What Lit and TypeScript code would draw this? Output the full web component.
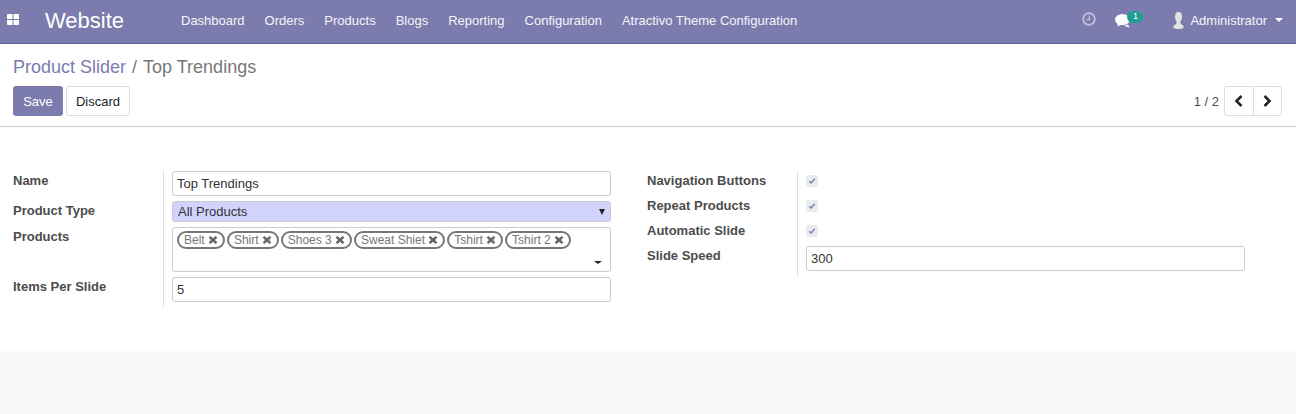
import { LitElement, html, css, svg } from "lit";
import { customElement } from "lit/decorators.js";

const MENU = ["Dashboard", "Orders", "Products", "Blogs", "Reporting", "Configuration", "Atractivo Theme Configuration"];
const TAGS = ["Belt", "Shirt", "Shoes 3", "Sweat Shiet", "Tshirt", "Tshirt 2"];

const closeIcon = svg`<svg class="x" width="10" height="10" viewBox="0 0 10 10"><path d="M.6 2.6 2.400 1 5 3.300 7.600 1 9.400 2.600 7 5l2.400 2.400L7.600 9 5 6.700 2.400 9 .6 7.400 3 5Z" fill="currentColor"/></svg>`;

@customElement("app-root")
export class AppRoot extends LitElement {
  static styles = css`
    :host {
      display: block;
      width: 1296px;
      height: 414px;
      overflow: hidden;
      background: #f9f9f9;
      font-family: "Liberation Sans", Arial, sans-serif;
      font-size: 13px;
      color: #4c4c4c;
    }
    .nav {
      height: 44px;
      box-sizing: border-box;
      background: #7c7bad;
      border-bottom: 1px solid #5e5d8e;
      display: flex;
      align-items: center;
      color: #fff;
    }
    .apps {
      margin-left: 7px;
      width: 12px;
      height: 11px;
      display: block;
      margin-top: -4px;
    }
    .brand {
      margin-left: 26px;
      width: 136px;
      font-size: 22px;
      margin-top: -2px;
    }
    .menu {
      display: flex;
      gap: 20px;
      flex: 1;
      margin-top: -3px;
      color: #f4f4f9;
    }
    .systray {
      display: flex;
      align-items: center;
      margin-top: -3px;
      color: #f4f4f9;
    }
    .clock {
      display: block;
      margin-right: 19px;
      margin-top: -2px;
    }
    .chat {
      position: relative;
      display: block;
      width: 16px;
      height: 15px;
      margin-right: 42px;
    }
    .badge {
      position: absolute;
      left: 12px;
      top: -2px;
      width: 16px;
      height: 12px;
      border-radius: 6px;
      background: #1f9e94;
      color: #fff;
      font-size: 9px;
      line-height: 11px;
      text-align: center;
    }
    .user {
      display: block;
      margin-right: 6px;
    }
    .caret {
      margin: 0 13px 0 8px;
      width: 0;
      height: 0;
      border-left: 4px solid transparent;
      border-right: 4px solid transparent;
      border-top: 4px solid #fff;
    }
    .panel {
      height: 83px;
      box-sizing: border-box;
      background: #fff;
      border-bottom: 1px solid #ccc;
      padding: 13px 14px 0 13px;
    }
    .crumbs {
      font-size: 18px;
      line-height: 21px;
      color: #777;
    }
    .crumbs .link {
      color: #7c7bad;
    }
    .crumbs .sep {
      margin: 0 6px;
    }
    .actions {
      display: flex;
      align-items: center;
      margin-top: 8px;
    }
    .btn {
      height: 30px;
      box-sizing: border-box;
      border-radius: 3px;
      display: flex;
      align-items: center;
      justify-content: center;
    }
    .save {
      width: 50px;
      background: #7c7bad;
      color: #fff;
    }
    .discard {
      width: 64px;
      margin-left: 3px;
      background: #fff;
      border: 1px solid #ddd;
      color: #212529;
    }
    .count {
      margin-left: auto;
      margin-right: 5px;
      color: #4c4c4c;
    }
    .pager {
      display: flex;
      width: 58px;
      height: 30px;
      box-sizing: border-box;
      border: 1px solid #ddd;
      border-radius: 3px;
    }
    .pager span {
      flex: 1;
      display: flex;
      align-items: center;
      justify-content: center;
    }
    .pager span + span {
      border-left: 1px solid #ddd;
    }
    .sheet {
      height: 224px;
      box-sizing: border-box;
      background: #fff;
      padding: 44px 0 0 13px;
      display: flex;
    }
    .group {
      display: grid;
      grid-template-columns: 150px 448px;
      align-content: start;
    }
    .group.right {
      margin-left: 36px;
    }
    .label {
      font-weight: 700;
      color: #4c4c4c;
      line-height: 15px;
      padding-top: 2px;
    }
    .value {
      border-left: 1px solid #ddd;
      padding-left: 8px;
      box-sizing: border-box;
      display: block;
      padding-bottom: 5px;
    }
    .input,
    .select,
    .many {
      box-sizing: border-box;
      background: #fff;
      border: 1px solid #ccc;
      border-radius: 3px;
      color: #333;
    }
    .input {
      height: 25px;
      line-height: 23px;
      padding-left: 4px;
    }
    .select {
      height: 21px;
      line-height: 20px;
      padding-left: 5px;
      background: #d2d2ff;
      position: relative;
    }
    .select::after {
      content: "";
      position: absolute;
      right: 5px;
      top: 7px;
      border-left: 3px solid transparent;
      border-right: 3px solid transparent;
      border-top: 6px solid #222;
    }
    .many {
      height: 45px;
      padding: 3px 0 0 4px;
      position: relative;
      display: flex;
      align-items: flex-start;
      gap: 2px;
    }
    .many::after {
      content: "";
      position: absolute;
      right: 8px;
      bottom: 7px;
      border-left: 4px solid transparent;
      border-right: 4px solid transparent;
      border-top: 3px solid #222;
    }
    .tag {
      height: 18px;
      box-sizing: border-box;
      border: 2px solid #777;
      border-radius: 9px;
      padding: 0 5.2px 0 5px;
      display: flex;
      align-items: center;
      gap: 3px;
      font-size: 12px;
      color: #777;
      white-space: nowrap;
    }
    .x {
      display: block;
      color: #666;
    }
    .check {
      width: 12px;
      height: 12px;
      border-radius: 2px;
      background: #e9ecef;
      display: flex;
      align-items: center;
      justify-content: center;
    }
    .check-cell {
      padding-bottom: 9px;
      padding-top: 4px;
      height: 25px;
    }
  `;

  private check() {
    return html`<div class="value check-cell"><div class="check">
      <svg width="8" height="8" viewBox="0 0 8 8"><path d="M1.200 4.200 3.100 6 6.800 1.800" fill="none" stroke="#7c7bad" stroke-width="1.400"/></svg>
    </div></div>`;
  }

  render() {
    return html`
      <div class="nav">
        <svg class="apps" viewBox="0 0 12 11"><path d="M0 1a1 1 0 0 1 1-1h4.500v5H0ZM6.500 0H11a1 1 0 0 1 1 1v4H6.500ZM0 6h5.500v5H1a1 1 0 0 1-1-1ZM6.500 6H12v4a1 1 0 0 1-1 1H6.500Z" fill="#fff"/></svg>
        <div class="brand">Website</div>
        <div class="menu">${MENU.map((m) => html`<span>${m}</span>`)}</div>
        <div class="systray">
          <svg class="clock" width="14" height="14" viewBox="0 0 14 14"><circle cx="7" cy="7" r="5.800" fill="none" stroke="#c4c4dc" stroke-width="1.700"/><path d="M7.400 3.600V7.600H4.600" fill="none" stroke="#c4c4dc" stroke-width="1.200"/></svg>
          <span class="chat">
            <svg width="16" height="15" viewBox="0 0 16 15"><ellipse cx="7.500" cy="6.500" rx="7.500" ry="5.500" fill="#fff"/><path d="M3 10 2.500 13.500 8 11Z" fill="#fff"/><path d="M9 12.500c1.600 0 3-.4 4-1.200l1.500 3.400-3-1.300c-1 .1-1.900-.2-2.500-.9Z" fill="#fff"/></svg>
            <span class="badge">1</span>
          </span>
          <svg class="user" width="11" height="17" viewBox="0 0 11 17"><path d="M5.500 0C3.200 0 2 2 2 4.500c0 2 .8 4 1.500 5 .3.800 0 1.800-.5 2.500C1.800 13 .3 13.500.3 15.200c0 1.100 2.200 1.800 5.200 1.800s5.200-.7 5.200-1.800c0-1.700-1.500-2.200-2.700-3.200-.5-.7-.8-1.700-.5-2.500.7-1 1.500-3 1.500-5C9 2 7.800 0 5.500 0Z" fill="#e2e2e2"/></svg>
          <span>Administrator</span>
          <span class="caret"></span>
        </div>
      </div>
      <div class="panel">
        <div class="crumbs"><span class="link">Product Slider</span><span class="sep">/</span>Top Trendings</div>
        <div class="actions">
          <div class="btn save">Save</div>
          <div class="btn discard">Discard</div>
          <span class="count">1 / 2</span>
          <div class="pager">
            <span><svg width="10" height="12" viewBox="0 0 10 12"><path d="M7.500 1 2.500 6l5 5" fill="none" stroke="#212529" stroke-width="2.600"/></svg></span>
            <span><svg width="10" height="12" viewBox="0 0 10 12"><path d="M2.500 1l5 5-5 5" fill="none" stroke="#212529" stroke-width="2.600"/></svg></span>
          </div>
        </div>
      </div>
      <div class="sheet">
        <div class="group">
          <div class="label">Name</div>
          <div class="value"><div class="input">Top Trendings</div></div>
          <div class="label">Product Type</div>
          <div class="value"><div class="select">All Products</div></div>
          <div class="label">Products</div>
          <div class="value">
            <div class="many">${TAGS.map((t) => html`<span class="tag">${t}${closeIcon}</span>`)}</div>
          </div>
          <div class="label">Items Per Slide</div>
          <div class="value"><div class="input">5</div></div>
        </div>
        <div class="group right">
          <div class="label">Navigation Buttons</div>
          ${this.check()}
          <div class="label">Repeat Products</div>
          ${this.check()}
          <div class="label">Automatic Slide</div>
          ${this.check()}
          <div class="label">Slide Speed</div>
          <div class="value"><div class="input">300</div></div>
        </div>
      </div>
    `;
  }
}
